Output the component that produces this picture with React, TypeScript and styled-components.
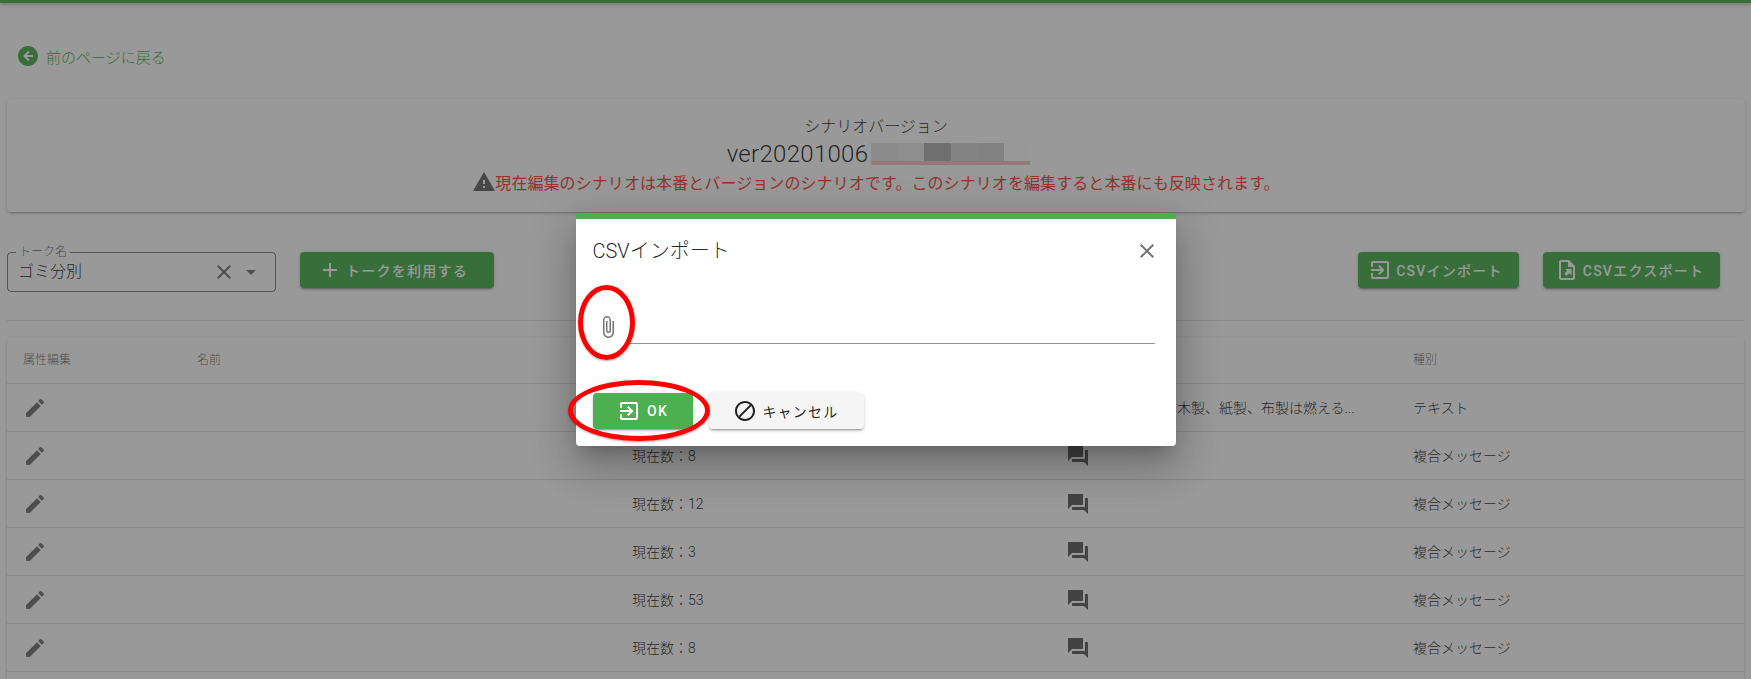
import styled, { createGlobalStyle } from "styled-components";
import {
  MdAdd,
  MdArrowDropDown,
  MdAttachFile,
  MdBlock,
  MdClose,
  MdEdit,
  MdExitToApp,
  MdQuestionAnswer,
  MdWarning,
} from "react-icons/md";

const green = "#4caf50";

const GlobalStyle = createGlobalStyle`
  html, body {
    margin: 0;
    padding: 0;
    height: 679px;
    overflow: hidden;
    background: #fff;
  }
  body {
    font-family: Roboto, "Noto Sans CJK JP", sans-serif;
    font-weight: 300;
    color: rgba(0, 0, 0, 0.87);
  }
  * {
    box-sizing: border-box;
  }
`;

const Page = styled.div`
  position: relative;
  height: 679px;
  overflow: hidden;
  background: #fff;
`;

const TopBar = styled.div`
  height: 3px;
  background: ${green};
  box-shadow: 0 1px 4px rgba(0, 0, 0, 0.4);
`;

const BackLink = styled.a`
  display: flex;
  align-items: center;
  gap: 8px;
  height: 20px;
  margin: 43px 0 33px 18px;
  font-size: 15px;
  color: ${green};
`;

const BackIcon = styled.svg`
  width: 20px;
  height: 20px;
  fill: ${green};
`;

const VersionCard = styled.section`
  display: flex;
  flex-direction: column;
  align-items: center;
  height: 113px;
  margin: 0 6px 40px 7px;
  padding-top: 18px;
  border-radius: 4px;
  background: #fff;
  box-shadow: 0 2px 2px -1px rgba(0, 0, 0, 0.3), 0 1px 4px rgba(0, 0, 0, 0.12);
`;

const VersionLabel = styled.div`
  font-size: 16px;
  line-height: 20px;
`;

const VersionName = styled.div`
  display: flex;
  align-items: center;
  height: 32px;
  margin: 1px 0 0 5px;
  font-size: 24px;
  letter-spacing: 0.3px;
`;

const Redaction = styled.div`
  display: flex;
  height: 22px;
  margin-left: 3px;
`;

const RedactBlock = styled.div<{ $tone: string }>`
  width: 26.5px;
  background: linear-gradient(${(p) => p.$tone} 80%, #f4c4c4 80%);
`;

const Warning = styled.div`
  display: flex;
  align-items: center;
  height: 24px;
  font-size: 16px;
  font-weight: 400;
  letter-spacing: 0.08px;
  color: #f44336;
  svg {
    color: rgba(0, 0, 0, 0.6);
    font-size: 24px;
    margin-right: -1px;
  }
`;

const Toolbar = styled.div`
  display: flex;
  align-items: flex-start;
  height: 68px;
  margin-left: 7px;
  padding-right: 31px;
`;

const SelectBox = styled.div`
  position: relative;
  display: flex;
  align-items: center;
  width: 269px;
  height: 40px;
  margin-right: 24px;
  padding: 0 12px 0 10px;
  border: 1px solid rgba(0, 0, 0, 0.5);
  border-radius: 4px;
  font-size: 16px;
  svg {
    color: rgba(0, 0, 0, 0.54);
  }
`;

const SelectLabel = styled.label`
  position: absolute;
  top: -8px;
  left: 8px;
  padding: 0 3px;
  background: #fff;
  font-size: 12px;
  line-height: 14px;
  color: rgba(0, 0, 0, 0.6);
`;

const SelectValue = styled.span`
  flex: 1;
  padding-bottom: 4px;
`;

const ClearIcon = styled(MdClose)`
  margin-right: 3px;
`;

const ActionButton = styled.button<{ $width: number; $tone?: "primary" | "plain"; $shift?: number }>`
  display: inline-flex;
  align-items: center;
  justify-content: center;
  gap: 4px;
  width: ${(p) => p.$width}px;
  height: 36px;
  padding: 0 ${(p) => p.$shift ?? 0}px 0 0;
  border: 0;
  border-radius: 4px;
  background: ${(p) => (p.$tone === "plain" ? "#f5f5f5" : green)};
  color: ${(p) => (p.$tone === "plain" ? "rgba(0, 0, 0, 0.87)" : "#fff")};
  font-family: inherit;
  font-size: 14px;
  font-weight: ${(p) => (p.$tone === "plain" ? 400 : 500)};
  letter-spacing: 1.25px;
  box-shadow: 0 3px 1px -2px rgba(0, 0, 0, 0.2), 0 2px 2px rgba(0, 0, 0, 0.14),
    0 1px 5px rgba(0, 0, 0, 0.12);
  svg {
    font-size: 24px;
    flex: none;
  }
`;

const ImportButton = styled(ActionButton)`
  margin-left: auto;
`;

const ExportButton = styled(ActionButton)`
  margin-left: 24px;
`;

const Divider = styled.hr`
  height: 1px;
  margin: 0 7px 16px;
  border: 0;
  background: rgba(0, 0, 0, 0.12);
`;

const Table = styled.div`
  margin: 0 7px;
  border-radius: 4px;
  background: #fff;
  box-shadow: 0 1px 3px rgba(0, 0, 0, 0.2);
`;

const Row = styled.div<{ $head?: boolean }>`
  display: grid;
  grid-template-columns: 174px 435px 434px 347px 1fr;
  align-items: center;
  height: ${(p) => (p.$head ? 47 : 48)}px;
  border-bottom: 1px solid rgba(0, 0, 0, 0.12);
  font-size: ${(p) => (p.$head ? 12 : 14)}px;
  color: ${(p) => (p.$head ? "rgba(0, 0, 0, 0.6)" : "rgba(0, 0, 0, 0.87)")};
`;

const Cell = styled.div`
  display: flex;
  align-items: center;
  padding: 0 16px;
  white-space: nowrap;
  overflow: hidden;
  svg {
    font-size: 24px;
    color: rgba(0, 0, 0, 0.54);
  }
`;

const TextCell = styled(Cell)`
  padding-bottom: 2px;
`;

const HeadCell = styled(Cell)`
  padding-bottom: 4px;
`;

const ChatIcon = styled(MdQuestionAnswer)`
  && {
    color: rgba(0, 0, 0, 0.62);
  }
`;

const Overlay = styled.div`
  position: absolute;
  inset: 0;
  display: flex;
  justify-content: center;
  align-items: flex-start;
  padding-top: 213px;
  background: rgba(33, 33, 33, 0.46);
`;

const Dialog = styled.div`
  position: relative;
  width: 600px;
  height: 233px;
  border-top: 6px solid ${green};
  border-radius: 4px;
  background: #fff;
  box-shadow: 0 11px 15px -7px rgba(0, 0, 0, 0.2), 0 24px 38px 3px rgba(0, 0, 0, 0.14),
    0 9px 46px 8px rgba(0, 0, 0, 0.12);
`;

const DialogHead = styled.div`
  display: flex;
  align-items: center;
  justify-content: space-between;
  height: 63px;
  padding: 0 17px;
  font-size: 20px;
  svg {
    font-size: 24px;
    color: rgba(0, 0, 0, 0.54);
  }
`;

const DialogTitle = styled.span`
  padding-bottom: 2px;
`;

const FileField = styled.div`
  display: flex;
  align-items: center;
  height: 40px;
  margin: 25px 21px 0 20px;
  svg {
    font-size: 24px;
    color: rgba(0, 0, 0, 0.54);
    flex: none;
  }
`;

const FileLine = styled.div`
  flex: 1;
  height: 37px;
  margin-left: 9px;
  border-bottom: 1px solid rgba(0, 0, 0, 0.42);
  align-self: flex-start;
`;

const DialogActions = styled.div`
  display: flex;
  gap: 16px;
  margin: 46px 0 0 17px;
`;

const OkButton = styled(ActionButton)`
  gap: 6px;
`;

const CancelButton = styled(ActionButton)`
  gap: 5px;
`;

const RedMark = styled.div<{ $x: number; $y: number; $w: number; $h: number; $line: number }>`
  position: absolute;
  left: ${(p) => p.$x}px;
  top: ${(p) => p.$y}px;
  width: ${(p) => p.$w}px;
  height: ${(p) => p.$h}px;
  border: ${(p) => p.$line}px solid #f00;
  border-radius: 50%;
  box-shadow: 0 1px 2px rgba(0, 0, 0, 0.35);
  pointer-events: none;
`;

const redactTones = ["#e6e6e6", "#eaeaea", "#b4b4b4", "#d8d8d8", "#d2d2d2", "#fdfdfd"];

const rows = [
  { count: "", kind: "テキスト", text: "分別の基本です、木製、紙製、布製は燃える..." },
  { count: "現在数：8", kind: "複合メッセージ" },
  { count: "現在数：12", kind: "複合メッセージ" },
  { count: "現在数：3", kind: "複合メッセージ" },
  { count: "現在数：53", kind: "複合メッセージ" },
  { count: "現在数：8", kind: "複合メッセージ" },
  { count: "", kind: "" },
];

export default function App() {
  return (
    <Page>
      <GlobalStyle />
      <TopBar />
      <BackLink>
        <BackIcon viewBox="0 0 24 24">
          <path d="M12 0C5.37 0 0 5.37 0 12s5.37 12 12 12 12-5.37 12-12S18.63 0 12 0zm6 13.2H10.6l3.3 3.3-1.7 1.7L6 12l6.2-6.2 1.7 1.7-3.3 3.3H18v2.4z" />
        </BackIcon>
        前のページに戻る
      </BackLink>

      <VersionCard>
        <VersionLabel>シナリオバージョン</VersionLabel>
        <VersionName>
          ver20201006
          <Redaction>
            {redactTones.map((tone, i) => (
              <RedactBlock key={i} $tone={tone} />
            ))}
          </Redaction>
        </VersionName>
        <Warning>
          <MdWarning />
          現在編集のシナリオは本番とバージョンのシナリオです。このシナリオを編集すると本番にも反映されます。
        </Warning>
      </VersionCard>

      <Toolbar>
        <SelectBox>
          <SelectLabel>トーク名</SelectLabel>
          <SelectValue>ゴミ分別</SelectValue>
          <ClearIcon size={24} />
          <MdArrowDropDown size={24} />
        </SelectBox>
        <ActionButton $width={194} $shift={8}>
          <MdAdd />
          トークを利用する
        </ActionButton>
        <ImportButton $width={161} $shift={6}>
          <MdExitToApp />
          CSVインポート
        </ImportButton>
        <ExportButton $width={177} $shift={4}>
          <svg width="24" height="24" viewBox="0 0 24 24" fill="currentColor">
            <path d="M14 2H6c-1.1 0-2 .9-2 2v16c0 1.1.9 2 2 2h12c1.1 0 2-.9 2-2V8l-6-6zm4 18H6V4h7v5h5v11z" />
            <path d="M10 11h6.5v6.5l-2.2-2.2-2.8 2.8-2.3-2.3 2.8-2.8z" />
          </svg>
          CSVエクスポート
        </ExportButton>
      </Toolbar>

      <Divider />

      <Table>
        <Row $head>
          <HeadCell>属性編集</HeadCell>
          <HeadCell>名前</HeadCell>
          <HeadCell />
          <HeadCell />
          <HeadCell>種別</HeadCell>
        </Row>
        {rows.map((row, i) => (
          <Row key={i}>
            <Cell>
              <MdEdit />
            </Cell>
            <Cell />
            <TextCell>{row.count}</TextCell>
            {row.text ? (
              <TextCell>{row.text}</TextCell>
            ) : (
              <Cell>
                <ChatIcon />
              </Cell>
            )}
            <TextCell>{row.kind}</TextCell>
          </Row>
        ))}
      </Table>

      <Overlay>
        <Dialog>
          <DialogHead>
            <DialogTitle>CSVインポート</DialogTitle>
            <MdClose />
          </DialogHead>
          <FileField>
            <MdAttachFile />
            <FileLine />
          </FileField>
          <DialogActions>
            <OkButton $width={100}>
              <MdExitToApp />
              OK
            </OkButton>
            <CancelButton $width={155} $tone="plain">
              <MdBlock />
              キャンセル
            </CancelButton>
          </DialogActions>
          <RedMark $x={2} $y={66} $w={57} $h={75} $line={5} />
          <RedMark $x={-8} $y={161} $w={142} $h={61} $line={5} />
        </Dialog>
      </Overlay>
    </Page>
  );
}
